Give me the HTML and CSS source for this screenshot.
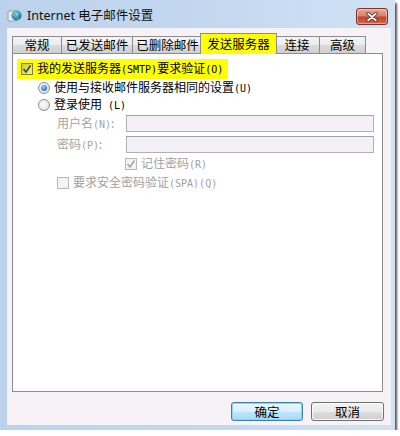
FILE: index.html
```html
<!DOCTYPE html>
<html lang="zh-CN">
<head>
<meta charset="utf-8">
<title>Internet 电子邮件设置</title>
<link rel="stylesheet" href="styles.css">
</head>
<body>
<div class="window">
  <div class="titlebar">
    <svg class="app-icon" width="15" height="15" viewBox="0 0 15 15">
      <defs>
        <radialGradient id="g" cx="0.4" cy="0.35" r="0.7">
          <stop offset="0" stop-color="#bfe6f5"/>
          <stop offset="0.5" stop-color="#3a9ad0"/>
          <stop offset="1" stop-color="#1c5f8c"/>
        </radialGradient>
      </defs>
      <rect x="1" y="3" width="8" height="10" rx="1" fill="#e8ecef" stroke="#8a9299" stroke-width="0.8"/>
      <circle cx="9.5" cy="7.5" r="5" fill="url(#g)"/>
      <path d="M7 4.5 C8.5 6 8 8 9.5 9 C11 10 11.5 11.5 10.5 12.3" fill="none" stroke="#5cb35c" stroke-width="1.3"/>
      <path d="M11 3.5 C12.5 4.5 13 6 12.5 7" fill="none" stroke="#5cb35c" stroke-width="1.1"/>
    </svg>
    <span class="title">Internet 电子邮件设置</span>
    <div class="close">
      <svg width="14" height="10" viewBox="0 0 14 10">
        <path d="M3 1.5 L11 8.5 M11 1.5 L3 8.5" stroke="#4a1a14" stroke-width="3.4" stroke-linecap="round"/>
        <path d="M3 1.5 L11 8.5 M11 1.5 L3 8.5" stroke="#ffffff" stroke-width="1.8" stroke-linecap="round"/>
      </svg>
    </div>
  </div>
  <div class="client">
    <div class="tabs">
      <div class="tab w-a">常规</div>
      <div class="tab w-b">已发送邮件</div>
      <div class="tab w-c">已删除邮件</div>
      <div class="tab selected">发送服务器</div>
      <div class="tab w-d">连接</div>
      <div class="tab w-e">高级</div>
    </div>
    <div class="panel">
      <div class="row-smtp">
        <span class="highlight"><span class="cb checked"><svg width="10" height="10" viewBox="0 0 10 10"><path d="M1.5 5 L4 8 L8.5 1.5" fill="none" stroke="#3d4a1c" stroke-width="1.6"/></svg></span><span class="txt">我的发送服务器<span class="k">(SMTP)</span>要求验证<span class="k">(O)</span></span></span>
      </div>
      <div class="row radio-row"><span class="radio on"></span><span class="txt">使用与接收邮件服务器相同的设置<span class="k">(U)</span></span></div>
      <div class="row radio-row"><span class="radio"></span><span class="txt">登录使用<span class="k"> (L)</span></span></div>
      <div class="row field first">
        <span class="label">用户名<span class="k">(N)</span>:</span>
        <span class="input"></span>
      </div>
      <div class="row field second">
        <span class="label">密码<span class="k">(P)</span>:</span>
        <span class="input"></span>
      </div>
      <div class="row remember disabled"><span class="cb dis"><svg width="10" height="10" viewBox="0 0 10 10"><path d="M1.5 5 L4 8 L8.5 1.5" fill="none" stroke="#a9a9a9" stroke-width="1.6"/></svg></span><span class="txt">记住密码<span class="k">(R)</span></span></div>
      <div class="row spa disabled"><span class="cb dis"></span><span class="txt">要求安全密码验证<span class="k">(SPA)(Q)</span></span></div>
    </div>
    <div class="buttons">
      <div class="btn default">确定</div>
      <div class="btn">取消</div>
    </div>
  </div>
</div>
</body>
</html>
```
FILE: styles.css
```css
html, body {
  margin: 0;
  padding: 0;
  background: #ffffff;
}
body {
  font-family: "Noto Sans CJK SC", "Noto Sans", sans-serif;
  font-size: 12px;
  color: #000;
}
.window {
  width: 395px;
  height: 430px;
  background: linear-gradient(90deg, #bcd2ec 0%, #c4d9f0 60%, #d2e2f4 100%);
  box-shadow: 2px 3px 2px rgba(30, 30, 30, 0.75);
  display: flex;
  flex-direction: column;
}
.titlebar {
  height: 28px;
  display: flex;
  align-items: center;
  padding-left: 7px;
  box-sizing: border-box;
  padding-top: 3px;
}
.app-icon {
  flex: none;
  margin-right: 5px;
}
.title {
  font-family: "Noto Sans", "Noto Sans CJK SC", sans-serif;
  font-size: 12.5px;
  line-height: 14px;
  color: #111;
}
.close {
  margin-left: auto;
  margin-right: 7px;
  align-self: flex-start;
  margin-top: 5px;
  width: 32px;
  height: 17px;
  box-sizing: border-box;
  border: 1px solid #7d3327;
  border-radius: 3px;
  background: linear-gradient(#e8a89a 0%, #d98370 45%, #c0432e 55%, #cf6a4f 100%);
  box-shadow: inset 0 0 0 1px rgba(255, 220, 210, 0.5);
  display: flex;
  align-items: center;
  justify-content: center;
}
.client {
  margin-left: 7px;
  width: 384px;
  height: 397px;
  background: #f6f2f5;
  box-sizing: border-box;
  padding: 5px 0 0 5px;
  display: flex;
  flex-direction: column;
}
.tabs {
  display: flex;
  height: 20px;
  align-items: flex-end;
  position: relative;
  z-index: 1;
}
.tab {
  height: 17px;
  box-sizing: border-box;
  border: 1px solid #898c95;
  border-bottom: none;
  margin-right: -1px;
  background: linear-gradient(#f4f4f4 0%, #ebebeb 50%, #dcdcdc 51%, #cfcfcf 100%);
  display: flex;
  align-items: center;
  justify-content: center;
  font-size: 12.5px;
  line-height: 14px;
  flex: none;
}
.w-a { width: 50px; }
.w-b { width: 72px; }
.w-c { width: 71px; margin-right: -3px; }
.tab.selected {
  width: 77px;
  height: 21px;
  margin-bottom: -1px;
  background: #ffff00;
  border-color: #898c95;
  position: relative;
  z-index: 2;
  margin-right: -3px;
  padding-bottom: 1px;
}
.w-d { width: 46px; }
.w-e { width: 47px; }
.panel {
  width: 371px;
  height: 339px;
  box-sizing: border-box;
  border: 1px solid #898c95;
  background: #ffffff;
  padding-top: 5px;
  display: flex;
  flex-direction: column;
}
.row-smtp {
  height: 20px;
  padding-left: 4px;
  display: flex;
}
.highlight {
  background: #ffff00;
  display: flex;
  align-items: center;
  padding: 0 5px 0 4px;
  line-height: 14px;
  white-space: nowrap;
}
.txt {
  line-height: 14px;
  white-space: nowrap;
}
.k {
  font-family: "DejaVu Sans Mono", "Liberation Mono", monospace;
  font-size: 10px;
}
.cb {
  width: 12px;
  height: 12px;
  box-sizing: border-box;
  border: 1px solid #8e8f8f;
  background: linear-gradient(135deg, #dcdcdc, #ffffff);
  display: inline-flex;
  align-items: center;
  justify-content: center;
  margin-right: 4px;
  flex: none;
}
.cb.checked {
  background: linear-gradient(135deg, #c9c94a, #f2f27a);
  border-color: #7d7d40;
}
.cb.dis {
  border-color: #b8b8b8;
  background: #f4f4f4;
}
.row {
  display: flex;
  align-items: center;
  height: 17px;
  line-height: 14px;
  white-space: nowrap;
}
.radio-row {
  padding-left: 25px;
}
.radio {
  width: 12px;
  height: 12px;
  box-sizing: border-box;
  border-radius: 50%;
  border: 1px solid #8e8f8f;
  background: radial-gradient(circle at 40% 40%, #ffffff 0%, #e4e4e4 70%, #cfcfcf 100%);
  margin-right: 4px;
  display: inline-flex;
  align-items: center;
  justify-content: center;
  flex: none;
}
.radio.on::after {
  content: "";
  width: 6px;
  height: 6px;
  border-radius: 50%;
  background: radial-gradient(circle at 40% 35%, #9fd3ff 0%, #3b86d6 55%, #174f94 100%);
}
.field {
  padding-left: 44px;
  color: #a3a3a3;
}
.field.first { margin-top: 2px; }
.field.second { margin-top: 4px; }
.label {
  width: 69px;
  flex: none;
}
.input {
  width: 248px;
  height: 17px;
  box-sizing: border-box;
  border: 1px solid #adb2b9;
  border-top-color: #9ea4ac;
  background: #f5f0f6;
}
.disabled {
  color: #9f9f9f;
}
.remember {
  margin-top: 2px;
  padding-left: 112px;
}
.spa {
  margin-top: 2px;
  padding-left: 44px;
}
.buttons {
  display: flex;
  justify-content: flex-end;
  gap: 8px;
  margin-top: 10px;
  padding-right: 7px;
}
.btn {
  width: 73px;
  height: 19px;
  box-sizing: border-box;
  border: 1px solid #707070;
  border-radius: 3px;
  background: linear-gradient(#f2f2f2 0%, #ebebeb 50%, #dddddd 51%, #cfcfcf 100%);
  box-shadow: inset 0 0 0 1px rgba(255, 255, 255, 0.8);
  display: flex;
  align-items: center;
  justify-content: center;
  font-size: 12.5px;
  line-height: 14px;
}
.btn.default {
  width: 72px;
  border-color: #3c7fb1;
  background: linear-gradient(#eaf6fd 0%, #d9f0fc 50%, #bee6fd 51%, #a7d9f5 100%);
  box-shadow: inset 0 0 0 1px #8fd3f5;
}
```
